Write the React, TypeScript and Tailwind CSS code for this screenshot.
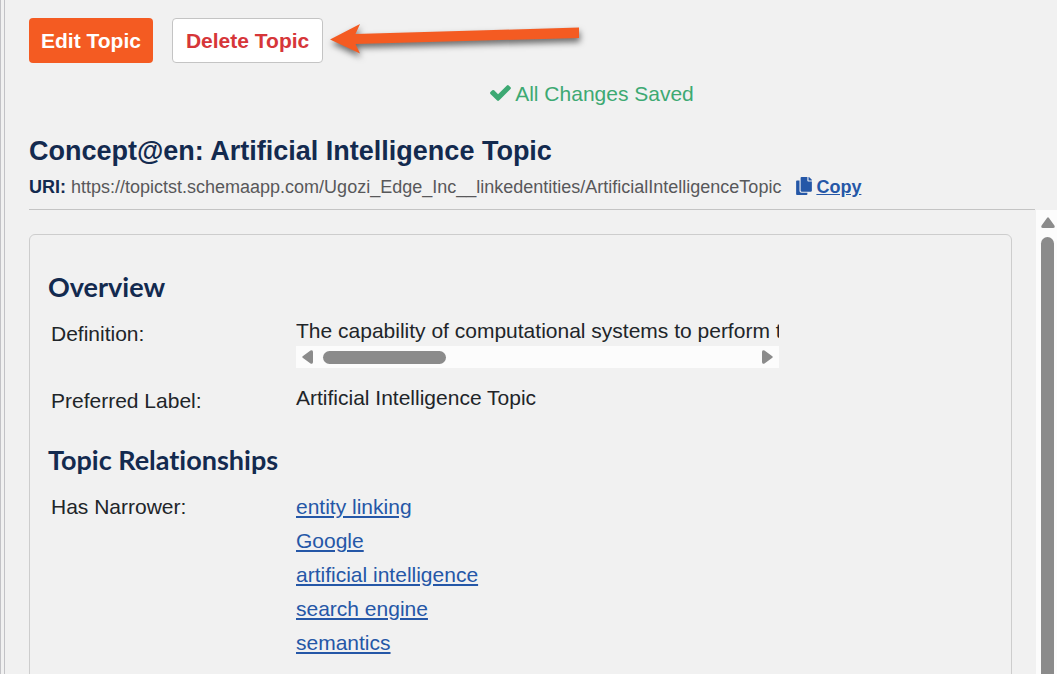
import { FaCopy } from 'react-icons/fa';

const TOPIC = {
  title: 'Concept@en: Artificial Intelligence Topic',
  uri: 'https://topictst.schemaapp.com/Ugozi_Edge_Inc__linkedentities/ArtificialIntelligenceTopic',
  definition: 'The capability of computational systems to perform tasks',
  label: 'Artificial Intelligence Topic',
  narrower: ['entity linking', 'Google', 'artificial intelligence', 'search engine', 'semantics'],
};

export default function App() {
  return (
    <div className="flex h-screen overflow-hidden bg-[#f1f1f1] font-['Liberation_Sans',Arial,sans-serif] text-[21px] leading-[30px] text-[#212529]">
      <div className="w-[5px] shrink-0 border-x border-[#c2c2c6]" />

      <div className="flex min-w-0 flex-1 flex-col">
        <header className="mr-[22px] ml-6 shrink-0 border-b border-[#c4c4c4] pt-[18px] pb-2">
          <div className="flex items-center">
            <button type="button" className="h-[45px] rounded bg-[#f45b22] px-3 font-bold text-white">
              Edit Topic
            </button>
            <button
              type="button"
              className="ml-[19px] h-[45px] rounded border border-[#c4c4c4] bg-white px-[13px] font-bold text-[#d63639]"
            >
              Delete Topic
            </button>
            <PointerArrow />
          </div>

          <p className="mt-4 flex items-center justify-center gap-1 pl-[120px] text-[#3da973]">
            <CheckIcon />
            All Changes Saved
          </p>

          <h1 className="mt-6 text-[27px] leading-9 font-bold text-[#132a4f]">{TOPIC.title}</h1>

          <div className="mt-1 flex items-center text-lg leading-7 whitespace-nowrap text-[#58585a]">
            <span className="mr-[5px] font-bold text-[#132a4f]">URI:</span>
            <span>{TOPIC.uri}</span>
            <a href="#copy" className="ml-[15px] flex items-center gap-1 font-bold text-[#2557a7]">
              <FaCopy className="mb-0.5 h-[18px] w-4" />
              <span className="underline">Copy</span>
            </a>
          </div>
        </header>

        <div className="flex min-h-0 flex-1">
          <main className="min-w-0 flex-1 overflow-hidden pt-6 pr-6 pl-6">
            <div className="min-h-full rounded-md border border-[#cdcdcd] px-[18px] pt-[34px] pb-6">
              <SectionTitle>Overview</SectionTitle>
              <Row label="Definition:">
                <div className="w-[483px] max-w-full">
                  <div className="overflow-hidden whitespace-nowrap">{TOPIC.definition}</div>
                  <HorizontalScrollbar />
                </div>
              </Row>
              <Row label="Preferred Label:">{TOPIC.label}</Row>

              <div className="h-[11px]" />
              <SectionTitle>Topic Relationships</SectionTitle>
              <Row label="Has Narrower:">
                <ul className="mt-[3px] space-y-1">
                  {TOPIC.narrower.map((name) => (
                    <li key={name}>
                      <a href="#topic" className="text-[#2557a7] underline">
                        {name}
                      </a>
                    </li>
                  ))}
                </ul>
              </Row>
            </div>
          </main>
          <VerticalScrollbar />
        </div>
      </div>
    </div>
  );
}

function SectionTitle({ children }: { children: React.ReactNode }) {
  return (
    <h2 className="font-[Lato,sans-serif] text-[27px] leading-9 font-bold text-[#132a4f] [font-variant-ligatures:none]">
      {children}
    </h2>
  );
}

function Row({ label, children }: { label: string; children: React.ReactNode }) {
  return (
    <div className="mt-[11px] mb-[15px] flex items-start">
      <div className="mt-[3px] w-[248px] shrink-0 pl-[3px]">{label}</div>
      <div className="min-w-0 flex-1">{children}</div>
    </div>
  );
}

function CheckIcon() {
  return (
    <svg viewBox="121 334 1550 1188" className="mb-0.5 h-4 w-[21px]" fill="currentColor" aria-hidden="true">
      <path d="M1671 566q0 40-28 68l-724 724-136 136q-28 28-68 28t-68-28l-136-136-362-362q-28-28-28-68t28-68l136-136q28-28 68-28t68 28l294 295 656-657q28-28 68-28t68 28l136 136q28 28 28 68z" />
    </svg>
  );
}

function PointerArrow() {
  return (
    <svg
      viewBox="0 0 256 40"
      className="ml-1 h-10 w-64 overflow-visible drop-shadow-[1px_4px_3px_rgba(0,0,0,0.55)]"
      aria-hidden="true"
    >
      <path d="M3 18.5 L33 3 L28.5 13 L252 6.5 V17 L28.5 23 L33 32.5 Z" fill="#f45b22" />
    </svg>
  );
}

function HorizontalScrollbar() {
  return (
    <div className="flex h-[22px] items-center bg-[#fcfcfc] px-[6px]" aria-hidden="true">
      <svg viewBox="0 0 11 14" className="h-[14px] w-[11px]" fill="#8b8b8b">
        <path d="M1 6 L8.5 .6 Q11 -.5 11 2 V12 Q11 14.5 8.5 13.4 L1 8 Q-.5 7 1 6 Z" />
      </svg>
      <div className="ml-[10px] h-[13px] w-[123px] rounded-full bg-[#8b8b8b]" />
      <svg viewBox="0 0 11 14" className="ml-auto h-[14px] w-[11px]" fill="#8b8b8b">
        <path d="M10 6 L2.5 .6 Q0 -.5 0 2 V12 Q0 14.5 2.5 13.4 L10 8 Q11.5 7 10 6 Z" />
      </svg>
    </div>
  );
}

function VerticalScrollbar() {
  return (
    <div className="flex w-[21px] shrink-0 flex-col items-center bg-[#fcfcfc] pt-[7px] pl-[2px]" aria-hidden="true">
      <svg viewBox="0 0 14 11" className="h-[11px] w-[14px] shrink-0" fill="#8b8b8b">
        <path d="M6 1 L.6 8.5 Q-.5 11 2 11 H12 Q14.5 11 13.4 8.5 L8 1 Q7 -.5 6 1 Z" />
      </svg>
      <div className="mt-[9px] w-[13px] flex-1 rounded-t-full bg-[#8b8b8b]" />
    </div>
  );
}
